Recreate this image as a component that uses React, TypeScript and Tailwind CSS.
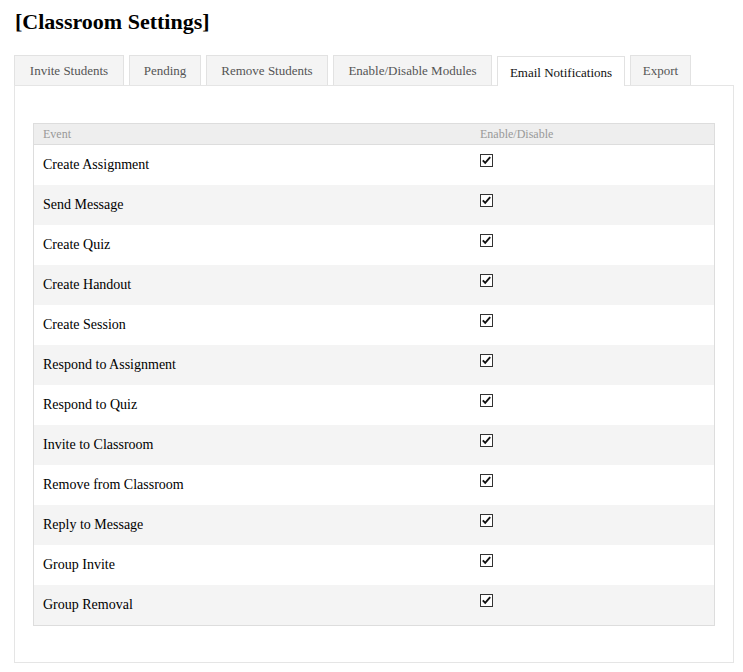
import React from "react";

const tabs: { t: string; w: string }[] = [
  { t: "Invite Students", w: "w-[110px]" },
  { t: "Pending", w: "w-[72px]" },
  { t: "Remove Students", w: "w-[122px]" },
  { t: "Enable/Disable Modules", w: "w-[159px]" },
  { t: "Email Notifications", w: "w-[128px]" },
  { t: "Export", w: "w-[61px]" },
];

const events = [
  "Create Assignment",
  "Send Message",
  "Create Quiz",
  "Create Handout",
  "Create Session",
  "Respond to Assignment",
  "Respond to Quiz",
  "Invite to Classroom",
  "Remove from Classroom",
  "Reply to Message",
  "Group Invite",
  "Group Removal",
];

function Check() {
  return (
    <svg width="13" height="13" viewBox="0 0 13 13" className="block">
      <rect x="0.5" y="0.5" width="12" height="12" fill="#fff" stroke="#333" />
      <path d="M2.8 6.4 L5.2 8.9 L10.2 3.2" fill="none" stroke="#111" strokeWidth="1.9" />
    </svg>
  );
}

export default function App() {
  return (
    <div
      className="min-h-[672px] bg-white pl-[14px] pr-[9px] pt-[9px] text-black"
      style={{ fontFamily: '"Liberation Serif", "Times New Roman", serif' }}
    >
      <h2 className="pl-px text-[22px] font-bold leading-[26px]">[Classroom Settings]</h2>
      <div className="mt-[20px] flex items-end gap-[5px]">
        {tabs.map(({ t, w }) => {
          const active = t === "Email Notifications";
          return active ? (
            <div
              key={t}
              className={`relative z-10 -mb-px flex h-[30px] items-center justify-center whitespace-nowrap border border-b-0 border-[#e2e2e2] bg-white pt-[2px] text-[13px] text-[#111] ${w}`}
            >
              {t}
            </div>
          ) : (
            <div
              key={t}
              className={`flex h-[30px] items-center justify-center whitespace-nowrap border border-b-0 border-[#e2e2e2] bg-[#f4f4f4] text-[13px] text-[#555] ${w}`}
            >
              {t}
            </div>
          );
        })}
      </div>
      <div className="w-[720px] border border-[#e5e5e5] px-[18px] pb-[36px] pt-[37px]">
        <div className="border border-[#dddddd]">
          <div className="flex h-[21px] items-center border-b border-[#dddddd] bg-[#eeeeee] text-[12px] text-[#999]">
            <div className="w-[437px] pl-[9px]">Event</div>
            <div className="pl-[9px]">Enable/Disable</div>
          </div>
          {events.map((e, i) => (
            <div
              key={e}
              className={`flex h-[40px] items-start pt-[9px] text-[14px] ${i % 2 === 1 ? "bg-[#f4f4f4]" : "bg-white"}`}
            >
              <div className="w-[437px] pl-[9px] pt-px leading-5">{e}</div>
              <div className="pl-[9px]">
                <Check />
              </div>
            </div>
          ))}
        </div>
      </div>
    </div>
  );
}
